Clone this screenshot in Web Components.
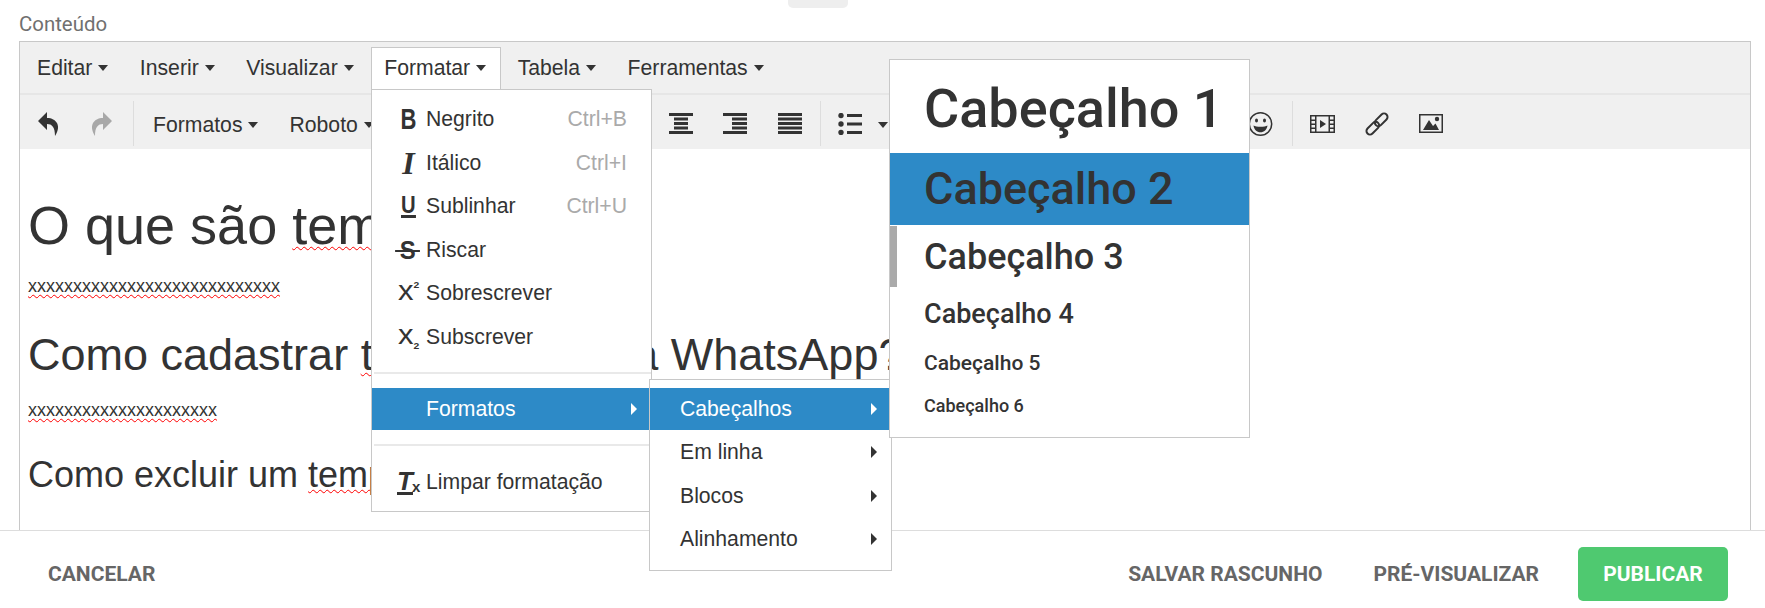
<!DOCTYPE html>
<html lang="pt">
<head>
<meta charset="utf-8">
<title>Conteúdo</title>
<style>
  html, body { margin: 0; height: 100%; overflow: hidden; background: #fff; }
</style>
</head>
<body>
<page-shell>
  <span slot="label">Conteúdo</span>

  <text-editor slot="editor">
    <menu-bar slot="menubar">
      <menu-button>Editar</menu-button>
      <menu-button>Inserir</menu-button>
      <menu-button>Visualizar</menu-button>
      <menu-button active>Formatar</menu-button>
      <menu-button>Tabela</menu-button>
      <menu-button>Ferramentas</menu-button>
    </menu-bar>

    <tool-bar slot="toolbar">
      <tool-group>
        <tool-icon name="undo" style="margin-left:18px"></tool-icon>
        <tool-icon name="redo" style="margin-left:34px"></tool-icon>
      </tool-group>
      <tool-divider style="margin-left:21px"></tool-divider>
      <tool-drop style="margin-left:19px">Formatos</tool-drop>
      <tool-drop style="margin-left:31px">Roboto</tool-drop>
      <tool-icon name="center" style="margin-left:295px"></tool-icon>
      <tool-icon name="right" style="margin-left:30px"></tool-icon>
      <tool-icon name="justify" style="margin-left:31px"></tool-icon>
      <tool-divider style="margin-left:18px"></tool-divider>
      <tool-icon name="list" style="margin-left:17px"></tool-icon>
      <tool-drop style="margin-left:16px"></tool-drop>
      <tool-icon name="smile" style="margin-left:360px"></tool-icon>
      <tool-divider style="margin-left:19px"></tool-divider>
      <tool-icon name="media" style="margin-left:17px"></tool-icon>
      <tool-icon name="link" style="margin-left:30px"></tool-icon>
      <tool-icon name="image" style="margin-left:30px"></tool-icon>
    </tool-bar>

    <doc-body slot="content">
      <doc-line kind="h1">O que são <spell-word>templates</spell-word>?</doc-line>
      <doc-line kind="p" style="margin-top:19px"><spell-word>xxxxxxxxxxxxxxxxxxxxxxxxxxxx</spell-word></doc-line>
      <doc-line kind="h2" style="margin-top:32px">Como cadastrar <spell-word>templates</spell-word> para WhatsApp?</doc-line>
      <doc-line kind="p" style="margin-top:18px"><spell-word>xxxxxxxxxxxxxxxxxxxxx</spell-word></doc-line>
      <doc-line kind="h3" style="margin-top:32px">Como excluir um <spell-word>template</spell-word>?</doc-line>
    </doc-body>
  </text-editor>

  <action-bar slot="footer">
    <action-button>CANCELAR</action-button>
    <span style="flex:1"></span>
    <action-button>SALVAR RASCUNHO</action-button>
    <action-button style="margin-left:51px">PRÉ-VISUALIZAR</action-button>
    <action-button primary style="margin-left:39px">PUBLICAR</action-button>
  </action-bar>

  <!-- open dropdowns, they lie over the editor -->
  <drop-menu slot="overlay" style="left:371px;top:89px;width:279px;padding:7px 0;z-index:1">
    <menu-row shortcut="Ctrl+B"><fmt-glyph slot="icon" kind="b"></fmt-glyph>Negrito</menu-row>
    <menu-row shortcut="Ctrl+I"><fmt-glyph slot="icon" kind="i"></fmt-glyph>Itálico</menu-row>
    <menu-row shortcut="Ctrl+U"><fmt-glyph slot="icon" kind="u"></fmt-glyph>Sublinhar</menu-row>
    <menu-row><fmt-glyph slot="icon" kind="s"></fmt-glyph>Riscar</menu-row>
    <menu-row><fmt-glyph slot="icon" kind="sup"></fmt-glyph>Sobrescrever</menu-row>
    <menu-row><fmt-glyph slot="icon" kind="sub"></fmt-glyph>Subscrever</menu-row>
    <menu-sep></menu-sep>
    <menu-row selected arrow>Formatos</menu-row>
    <menu-sep></menu-sep>
    <menu-row><fmt-glyph slot="icon" kind="clear"></fmt-glyph>Limpar formatação</menu-row>
  </drop-menu>

  <drop-menu slot="overlay" style="left:649px;top:379px;width:241px;padding:8px 0 9px;z-index:2">
    <menu-row selected arrow plain>Cabeçalhos</menu-row>
    <menu-row arrow plain>Em linha</menu-row>
    <menu-row arrow plain>Blocos</menu-row>
    <menu-row arrow plain>Alinhamento</menu-row>
  </drop-menu>

  <drop-menu slot="overlay" style="left:889px;top:59px;width:359px;padding:0 0 10px;z-index:3">
    <heading-row size="54" height="89" pad="4">Cabeçalho 1</heading-row>
    <heading-row size="45" height="72" selected>Cabeçalho 2</heading-row>
    <heading-row size="36" height="60" pad="2" thumb>Cabeçalho 3</heading-row>
    <heading-row size="27" height="49" pad="3">Cabeçalho 4</heading-row>
    <heading-row size="21" height="44" pad="2">Cabeçalho 5</heading-row>
    <heading-row size="18" height="42">Cabeçalho 6</heading-row>
  </drop-menu>
</page-shell>

<script>
const ARIAL = '"Liberation Sans", Arial, sans-serif'
const ROBOTO = 'Roboto, "Liberation Sans", sans-serif'

// small helper, every element gets an open shadow root from its html
function shadow (el, html) {
  el.attachShadow({ mode: 'open' })
  el.shadowRoot.innerHTML = html
}

class PageShell extends HTMLElement {
  constructor () {
    super()
    shadow(this, `
      <style>
        :host { display: flex; flex-direction: column; position: relative; height: 608px; overflow: hidden;
                font-family: ${ARIAL}; color: #333; }
        .tab { width: 60px; height: 8px; margin-left: 788px; background: #eee; border-radius: 0 0 5px 5px; }
        .label { height: 33px; padding-left: 19px; font: 20.4px/32px ${ROBOTO}; color: #707070; }
        .editor { flex: 1; min-height: 0; display: flex; padding: 0 14px 0 19px; }
      </style>
      <div class="tab"></div>
      <div class="label"><slot name="label"></slot></div>
      <div class="editor"><slot name="editor"></slot></div>
      <slot name="footer"></slot>
      <slot name="overlay"></slot>`)
  }
}

class TextEditor extends HTMLElement {
  constructor () {
    super()
    shadow(this, `
      <style>
        :host { display: flex; flex-direction: column; flex: 1; min-width: 0; overflow: hidden;
                border: 1px solid #c8c8c8; border-bottom: 0; }
      </style>
      <slot name="menubar"></slot>
      <slot name="toolbar"></slot>
      <slot name="content"></slot>`)
  }
}

class MenuBar extends HTMLElement {
  constructor () {
    super()
    shadow(this, `
      <style>
        :host { display: flex; gap: 1.5px; height: 53px; padding: 5px 0 0 2px; box-sizing: border-box;
                background: #f0f0f0; border-bottom: 2px solid #e6e6e6; }
      </style>
      <slot></slot>`)
  }
}

class MenuButton extends HTMLElement {
  constructor () {
    super()
    shadow(this, `
      <style>
        :host { display: flex; align-items: center; height: 42px; padding: 0 14px 2px; box-sizing: border-box;
                font: 21.2px ${ARIAL}; color: #333; border: 1px solid transparent; border-bottom: 0; }
        :host([active]) { background: #fff; border-color: #c8c8c8; margin-left: 1px; padding: 0 14px 2px 12px; }
        i { width: 0; height: 0; margin-left: 6px; border: 5.5px solid transparent;
            border-top: 6px solid #333; border-bottom: 0; }
      </style>
      <slot></slot><i></i>`)
  }
}

class ToolBar extends HTMLElement {
  constructor () {
    super()
    shadow(this, `
      <style>
        :host { display: flex; align-items: center; height: 54px; background: #f0f0f0; padding-top: 3px; box-sizing: border-box; }
      </style>
      <slot></slot>`)
  }
}

class ToolGroup extends HTMLElement {
  constructor () {
    super()
    shadow(this, `<style>:host { display: flex; align-items: center; }</style><slot></slot>`)
  }
}

class ToolDivider extends HTMLElement {
  constructor () {
    super()
    shadow(this, `<style>:host { display: block; width: 1px; height: 45px; background: #ddd; }</style>`)
  }
}

class ToolDrop extends HTMLElement {
  constructor () {
    super()
    shadow(this, `
      <style>
        :host { display: flex; align-items: center; padding-top: 2px; font: 21.2px ${ARIAL}; color: #333; }
        i { width: 0; height: 0; margin-left: 6px; border: 5.5px solid transparent;
            border-top: 6px solid #333; border-bottom: 0; }
        :host(:empty) i { margin-left: 0; }
      </style>
      <slot></slot><i></i>`)
  }
}

const ICONS = {
  undo: [20, 24, '<path fill="#333" d="M9 0 0 9l9 9v-6c5 0 8 3 8 12 3-5 4-9 2-13-2-3-5-5-10-5z"/>'],
  redo: [20, 24, '<path fill="#a8a8a8" d="M11 0l9 9-9 9v-6c-5 0-8 3-8 12-3-5-4-9-2-13 2-3 5-5 10-5z"/>'],
  center: [24, 21, '<path fill="#333" d="M0 0h24v3H0zM5 4.600h14v2.800H5zM5 9.100h14v2.800H5zM5 13.600h14v2.800H5zM0 18h24v3H0z"/>'],
  right: [24, 21, '<path fill="#333" d="M0 0h24v3H0zM9 4.600h15v2.800H9zM9 9.100h15v2.800H9zM9 13.600h15v2.800H9zM0 18h24v3H0z"/>'],
  justify: [24, 21, '<path fill="#333" d="M0 0h24v3H0zM0 4.500h24v3H0zM0 9h24v3H0zM0 13.500h24v3H0zM0 18h24v3H0z"/>'],
  list: [24, 22, '<g fill="#333"><circle cx="3" cy="2.500" r="2.700"/><circle cx="3" cy="11" r="2.700"/><circle cx="3" cy="19.500" r="2.700"/><path d="M9 1h15v3H9zM9 9.500h15v3H9zM9 18h15v3H9z"/></g>'],
  smile: [25, 24, '<circle cx="12.500" cy="12" r="11.200" fill="none" stroke="#333" stroke-width="1.500"/><ellipse cx="8.500" cy="8.500" rx="1.500" ry="2" fill="#333"/><ellipse cx="16.500" cy="8.500" rx="1.500" ry="2" fill="#333"/><path fill="#333" d="M5.500 13.500c2.500 1.800 11.500 1.800 14 0-.5 4-3.500 6.800-7 6.800s-6.500-2.800-7-6.800z"/>'],
  media: [25, 18, '<path fill="#333" fill-rule="evenodd" d="M0 0h25v18H0zM1.500 1.500v3h3.500v-3zM1.500 6v2.500h3.500V6zM1.500 10v2.500h3.500V10zM1.500 14v2.500h3.500V14zM20 1.500v3h3.500v-3zM20 6v2.500h3.500V6zM20 10v2.500h3.500V10zM20 14v2.500h3.500V14zM6.500 1.500v15h12v-15z"/><path fill="#333" d="M10 5l6 4-6 4z"/>'],
  link: [24, 24, '<g fill="none" stroke="#333" stroke-width="2"><rect x="12.700" y="0.300" width="7" height="15" rx="3.500" transform="rotate(45 16.200 7.800)"/><rect x="4.300" y="8.700" width="7" height="15" rx="3.500" transform="rotate(45 7.800 16.200)"/></g>'],
  image: [24, 19, '<path fill="#333" fill-rule="evenodd" d="M0 0h24v19H0zM1.500 1.500v16h21v-16z"/><path fill="#333" d="M4 16l6-10 4 6 2.500-2.500L20 16z"/><circle cx="18" cy="5" r="2.200" fill="#333"/>']
}

class ToolIcon extends HTMLElement {
  constructor () {
    super()
    this.attachShadow({ mode: 'open' })
  }

  connectedCallback () {
    const [w, h, body] = ICONS[this.getAttribute('name')]
    this.shadowRoot.innerHTML = `
      <style>:host { display: flex; } svg { display: block; }</style>
      <svg width="${w}" height="${h}" viewBox="0 0 ${w} ${h}">${body}</svg>`
  }
}

class DocBody extends HTMLElement {
  constructor () {
    super()
    shadow(this, `
      <style>:host { display: block; flex: 1; padding: 46px 0 0 8px; background: #fff; overflow: hidden; }</style>
      <slot></slot>`)
  }
}

class DocLine extends HTMLElement {
  constructor () {
    super()
    shadow(this, `
      <style>
        :host { display: block; white-space: nowrap; font-family: ${ARIAL}; color: #333; }
        :host([kind="h1"]) { font-size: 54px; line-height: 60px; }
        :host([kind="h2"]) { font-size: 45px; line-height: 50px; }
        :host([kind="h3"]) { font-size: 36px; line-height: 42px; }
        :host([kind="p"]) { font-size: 18px; line-height: 24px; }
      </style>
      <slot></slot>`)
  }
}

class SpellWord extends HTMLElement {
  constructor () {
    super()
    shadow(this, `
      <style>
        :host { text-decoration: underline wavy #f00; text-decoration-thickness: 1px; text-underline-offset: 2px; }
      </style>
      <slot></slot>`)
  }
}

class DropMenu extends HTMLElement {
  constructor () {
    super()
    shadow(this, `
      <style>
        :host { display: block; position: absolute; box-sizing: content-box; background: #fff; border: 1px solid #c8c8c8;
                padding: 8px 0; font-family: ${ARIAL}; color: #333; }
      </style>
      <slot></slot>`)
  }
}

class MenuRow extends HTMLElement {
  constructor () {
    super()
    this.attachShadow({ mode: 'open' })
  }

  connectedCallback () {
    const shortcut = this.getAttribute('shortcut')
    this.shadowRoot.innerHTML = `
      <style>
        :host { display: flex; align-items: center; height: 43.5px; padding: 1px 24px 0 25px; box-sizing: border-box; font-size: 21.2px; color: #333; }
        :host([plain]) { padding-left: 30px; }
        :host([selected]) { background: #2d8ac7; color: #fff; height: 42px; padding-top: 0; }
        .icon { width: 24px; margin-right: 5px; display: flex; justify-content: center; }
        :host([plain]) .icon { display: none; }
        .text { flex: 1; white-space: nowrap; }
        .key { color: #aaa; }
        .arrow { width: 0; height: 0; margin-right: -10px; border: 6px solid transparent; border-left: 6px solid currentColor; border-right: 0; }
      </style>
      <span class="icon"><slot name="icon"></slot></span>
      <span class="text"><slot></slot></span>
      ${shortcut ? `<span class="key">${shortcut}</span>` : ''}
      ${this.hasAttribute('arrow') ? '<span class="arrow"></span>' : ''}`
  }
}

class MenuSep extends HTMLElement {
  constructor () {
    super()
    shadow(this, `
      <style>:host { display: block; height: 2px; margin: 14px 0 14px 2px; background: #e9e9e9; }</style>`)
  }
}

// the format letters of the menu, kept as real glyphs
class FmtGlyph extends HTMLElement {
  constructor () {
    super()
    this.attachShadow({ mode: 'open' })
  }

  connectedCallback () {
    const glyphs = {
      b: '<b class="b">B</b>',
      i: '<b class="i">I</b>',
      u: '<span class="u">U</span>',
      s: '<span class="s">S</span>',
      sup: '<span class="x">x<small class="up">2</small></span>',
      sub: '<span class="x">x<small class="dn">2</small></span>',
      clear: '<span class="t">T<small>x</small></span>'
    }
    this.shadowRoot.innerHTML = `
      <style>
        :host { display: flex; justify-content: center; align-items: center; height: 26px; color: #333; font-family: ${ARIAL}; line-height: 26px; }
        .b { font-size: 29px; transform: scaleX(.76); margin-right: 1px; }
        .i { font: italic bold 32px/26px "Liberation Serif", serif; margin-right: 1px; }
        .u { font-size: 23px; font-weight: bold; line-height: 20px; border-bottom: 3px solid #333; transform: scaleX(.88); margin-right: 1px; }
        .s { font-size: 26px; font-weight: bold; position: relative; transform: scaleX(.92); margin-right: 3px; }
        .s::after { content: ""; position: absolute; left: -5px; right: -5px; top: 13px; height: 2px; background: #333; }
        .x { font-size: 27px; position: relative; margin-right: 7px; transform: translateY(-2px) scaleX(1.15); }
        small { font-size: 9px; font-weight: bold; line-height: 9px; }
        .up, .dn { position: absolute; left: 100%; }
        .up { top: 3px; }
        .dn { top: 20px; }
        .t { font: italic bold 26px/22px ${ARIAL}; border-bottom: 3px solid #333; margin-right: 8px; position: relative; }
        .t small { position: absolute; left: 15px; top: 9px; font: bold 15px/15px ${ARIAL}; }
      </style>
      ${glyphs[this.getAttribute('kind')]}`
  }
}

class HeadingRow extends HTMLElement {
  constructor () {
    super()
    this.attachShadow({ mode: 'open' })
  }

  connectedCallback () {
    const size = this.getAttribute('size')
    const height = this.getAttribute('height')
    const pad = this.getAttribute('pad') || 0
    this.shadowRoot.innerHTML = `
      <style>
        :host { display: block; position: relative; padding: ${pad}px 0 0 34px; font: 500 ${size}px/${height}px ${ROBOTO}; color: #333; white-space: nowrap; }
        :host([selected]) { background: #2d8ac7; }
        .thumb { position: absolute; left: 0; top: 1px; width: 7px; height: 61px; background: #aaa; }
      </style>
      ${this.hasAttribute('thumb') ? '<span class="thumb"></span>' : ''}<slot></slot>`
  }
}

class ActionBar extends HTMLElement {
  constructor () {
    super()
    shadow(this, `
      <style>
        :host { display: flex; align-items: center; flex: none; height: 78px; box-sizing: border-box; padding: 9px 37px 0 48px;
                background: #fff; border-top: 1px solid #ddd; position: relative; }
      </style>
      <slot></slot>`)
  }
}

class ActionButton extends HTMLElement {
  constructor () {
    super()
    shadow(this, `
      <style>
        :host { display: flex; align-items: center; font: 700 21px ${ROBOTO}; color: #666; white-space: nowrap; }
        :host([primary]) { height: 54px; width: 150px; justify-content: center; color: #fff; background: #4fc970; border-radius: 5px; }
      </style>
      <slot></slot>`)
  }
}

customElements.define('page-shell', PageShell)
customElements.define('text-editor', TextEditor)
customElements.define('menu-bar', MenuBar)
customElements.define('menu-button', MenuButton)
customElements.define('tool-bar', ToolBar)
customElements.define('tool-group', ToolGroup)
customElements.define('tool-divider', ToolDivider)
customElements.define('tool-drop', ToolDrop)
customElements.define('tool-icon', ToolIcon)
customElements.define('doc-body', DocBody)
customElements.define('doc-line', DocLine)
customElements.define('spell-word', SpellWord)
customElements.define('drop-menu', DropMenu)
customElements.define('menu-row', MenuRow)
customElements.define('menu-sep', MenuSep)
customElements.define('fmt-glyph', FmtGlyph)
customElements.define('heading-row', HeadingRow)
customElements.define('action-bar', ActionBar)
customElements.define('action-button', ActionButton)
</script>
</body>
</html>
